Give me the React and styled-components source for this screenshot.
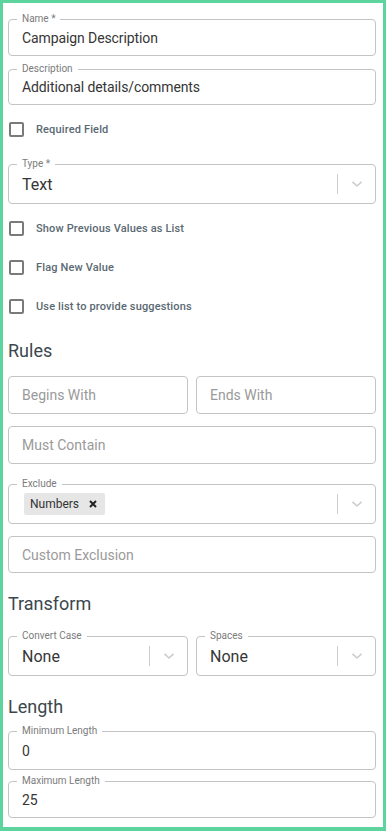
import styled, { createGlobalStyle } from 'styled-components'

const GlobalStyle = createGlobalStyle`
    html, body {
        margin: 0;
        padding: 0;
        background: #fff;
    }
    * {
        box-sizing: border-box;
    }
`

const Page = styled.div`
    height: 831px;
    border: 3px solid #5dd39e;
    border-bottom-width: 4px;
    padding: 16px 7px 0 5px;
    font-family: Roboto, 'Liberation Sans', sans-serif;
    display: flex;
    flex-direction: column;
    background: #fff;
`

const Outlined = styled.div`
    position: relative;
    height: ${(p) => p.$h}px;
    border: 1px solid #c4c4c4;
    border-radius: 4px;
    display: flex;
    align-items: center;
    padding-left: 13px;
    flex: 1;
`

const FloatLabel = styled.span`
    position: absolute;
    top: -7px;
    left: 8px;
    padding: 0 5px;
    background: #fff;
    font-size: 10px;
    line-height: 12px;
    color: #7b7b7b;
`

const Value = styled.span`
    font-size: ${(p) => p.$size || 14}px;
    letter-spacing: ${(p) => (p.$size ? 0 : -0.1)}px;
    color: #363636;
    flex: 1;
`

const Placeholder = styled.span`
    font-size: 14px;
    color: #9a9a9a;
`

const Row = styled.div`
    display: flex;
    gap: 8px;
    margin-top: ${(p) => p.$mt || 0}px;
`

const CheckRow = styled.label`
    display: flex;
    align-items: center;
    height: 16px;
    margin-top: ${(p) => p.$mt || 0}px;
    padding-left: 1px;
`

const Box = styled.span`
    width: 15px;
    height: 15px;
    border: 2px solid #7a7a7a;
    border-radius: 2px;
    flex-shrink: 0;
`

const CheckText = styled.span`
    margin-left: 12px;
    font-size: 11px;
    font-weight: 500;
    letter-spacing: 0.15px;
    color: #5a6972;
`

const Heading = styled.h3`
    margin: ${(p) => p.$mt || 0}px 0 0;
    font-size: 18px;
    line-height: 22px;
    font-weight: 400;
    color: #3b474d;
`

const Indicator = styled.div`
    display: flex;
    align-items: center;
    height: 100%;
`

const Separator = styled.span`
    width: 1px;
    height: 20px;
    background: #cccccc;
`

const Chevron = styled.span`
    width: 37px;
    display: flex;
    justify-content: center;
    color: #cccccc;
`

const Chip = styled.span`
    display: inline-flex;
    align-items: center;
    height: 22px;
    padding: 0 8px 0 6px;
    background: #e6e6e6;
    border-radius: 2px;
    font-size: 12px;
    color: #333;
    margin-left: 2px;
`

const ChipX = styled.svg`
    margin-left: 10px;
    color: #222;
`

const ChipArea = styled.div`
    flex: 1;
    display: flex;
    align-items: center;
`

function SelectIndicator() {
    return (
        <Indicator>
            <Separator />
            <Chevron>
                <svg width='12' height='8' viewBox='0 0 12 8' fill='none'>
                    <path d='M1.5 1.8 6 6 10.5 1.8' stroke='currentColor' strokeWidth='1.6' />
                </svg>
            </Chevron>
        </Indicator>
    )
}

function Check({ mt, children }) {
    return (
        <CheckRow $mt={mt}>
            <Box />
            <CheckText>{children}</CheckText>
        </CheckRow>
    )
}

export default function App() {
    return (
        <Page>
            <GlobalStyle />
            <Row>
                <Outlined $h={37}>
                    <FloatLabel>Name *</FloatLabel>
                    <Value>Campaign Description</Value>
                </Outlined>
            </Row>
            <Row $mt={13}>
                <Outlined $h={36}>
                    <FloatLabel>Description</FloatLabel>
                    <Value>Additional details/comments</Value>
                </Outlined>
            </Row>
            <Check mt={16}>Required Field</Check>
            <Row $mt={27}>
                <Outlined $h={40}>
                    <FloatLabel>Type *</FloatLabel>
                    <Value $size={16}>Text</Value>
                    <SelectIndicator />
                </Outlined>
            </Row>
            <Check mt={16}>Show Previous Values as List</Check>
            <Check mt={23}>Flag New Value</Check>
            <Check mt={23}>Use list to provide suggestions</Check>

            <Heading $mt={26}>Rules</Heading>
            <Row $mt={14}>
                <Outlined $h={38}>
                    <Placeholder>Begins With</Placeholder>
                </Outlined>
                <Outlined $h={38}>
                    <Placeholder>Ends With</Placeholder>
                </Outlined>
            </Row>
            <Row $mt={12}>
                <Outlined $h={38}>
                    <Placeholder>Must Contain</Placeholder>
                </Outlined>
            </Row>
            <Row $mt={20}>
                <Outlined $h={40}>
                    <FloatLabel>Exclude</FloatLabel>
                    <ChipArea>
                        <Chip>
                            Numbers
                            <ChipX width='8' height='8' viewBox='0 0 8 8'>
                                <path d='M1 1 7 7M7 1 1 7' stroke='currentColor' strokeWidth='2' />
                            </ChipX>
                        </Chip>
                    </ChipArea>
                    <SelectIndicator />
                </Outlined>
            </Row>
            <Row $mt={12}>
                <Outlined $h={37}>
                    <Placeholder>Custom Exclusion</Placeholder>
                </Outlined>
            </Row>

            <Heading $mt={20}>Transform</Heading>
            <Row $mt={21}>
                <Outlined $h={40}>
                    <FloatLabel>Convert Case</FloatLabel>
                    <Value $size={16}>None</Value>
                    <SelectIndicator />
                </Outlined>
                <Outlined $h={40}>
                    <FloatLabel>Spaces</FloatLabel>
                    <Value $size={16}>None</Value>
                    <SelectIndicator />
                </Outlined>
            </Row>

            <Heading $mt={20}>Length</Heading>
            <Row $mt={13}>
                <Outlined $h={39}>
                    <FloatLabel>Minimum Length</FloatLabel>
                    <Value>0</Value>
                </Outlined>
            </Row>
            <Row $mt={11}>
                <Outlined $h={37}>
                    <FloatLabel>Maximum Length</FloatLabel>
                    <Value>25</Value>
                </Outlined>
            </Row>
        </Page>
    )
}
